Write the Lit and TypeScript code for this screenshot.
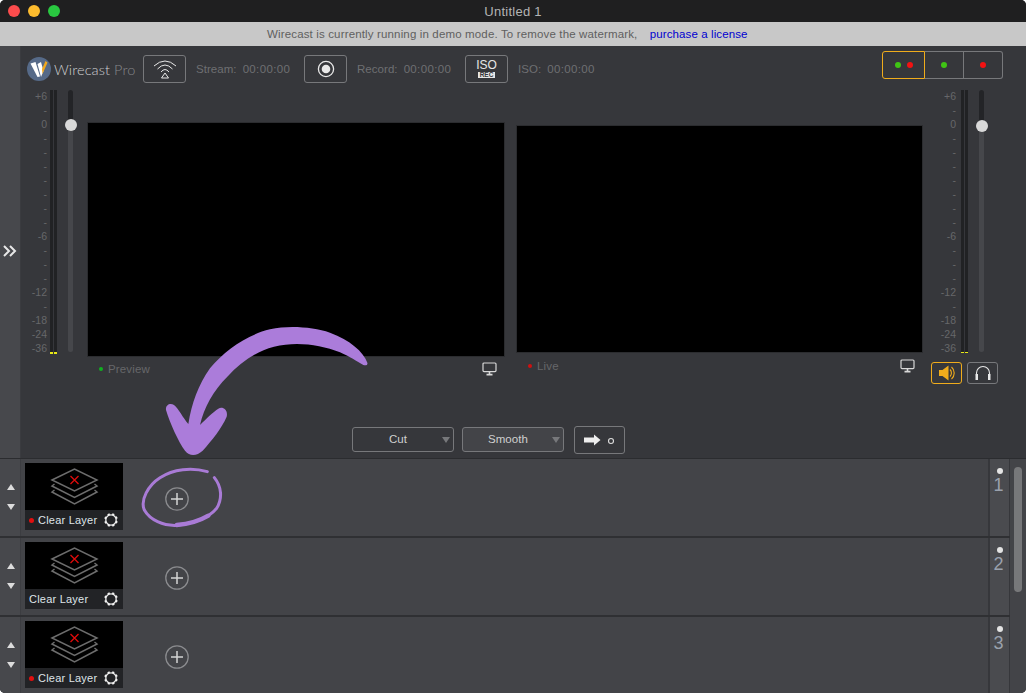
import { LitElement, html, css, svg } from "lit";
import { customElement } from "lit/decorators.js";

const SCALE = ["+6","-","0","-","-","-","-","-","-","-","-6","-","-","-","-12","-","-18","-24","-36"];
const LAYERS = [{ n: 1, dot: true }, { n: 2, dot: false }, { n: 3, dot: true }];

const monitorIcon = html`<svg class="mon" width="15" height="14" viewBox="0 0 15 14" fill="none" stroke="#d8d8d8" stroke-width="1.2"><rect x="1" y="1" width="13" height="8.6" rx="1"/><path d="M7.5 10v2.4M4.5 12.6h6" stroke-width="1.6"/></svg>`;

const gear = svg`<g transform="translate(8 8)" stroke="#f2f2f2" fill="none"><circle r="5.2" stroke-width="1.3"/>${[0,45,90,135,180,225,270,315].map(a => svg`<path d="M0 -5v-1.8" stroke-width="2.2" transform="rotate(${a + 22})"/>`)}</g>`;

@customElement("app-root")
export class AppRoot extends LitElement {
  static styles = css`
    :host { display: block; width: 1026px; height: 693px; font-family: "Liberation Sans", Arial, sans-serif; background: #fff; }
    .win { width: 1026px; height: 693px; overflow: hidden; border-radius: 5px; display: flex; flex-direction: column; background: #36373b; position: relative; }
    .title { height: 22px; flex: none; background: #1f1f20; color: #b4b4b4; font-size: 13px; letter-spacing: .25px; display: flex; align-items: center; justify-content: center; position: relative; }
    .lights { position: absolute; left: 8px; top: 5px; display: flex; gap: 8px; }
    .lights i { width: 12px; height: 12px; border-radius: 50%; display: block; }
    .red { background: #fc4c4d; } .yel { background: #fdbc2e; } .grn { background: #29c840; }
    .demo { height: 24px; flex: none; background: #c8c8c8; color: #5f5f5f; font-size: 11.5px; display: flex; align-items: center; padding-left: 267px; letter-spacing: .15px; white-space: pre; }
    .demo a { color: #0000d0; margin-left: 9px; letter-spacing: .1px; }
    .main { height: 412px; flex: none; display: flex; }
    .side { width: 21px; flex: none; background: #47484c; display: flex; align-items: center; justify-content: center; border-right: 1px solid #3a3b3f; box-sizing: border-box; }
    .side svg { margin-top: -2px; }
    .content { flex: 1; display: flex; flex-direction: column; min-width: 0; }
    .toolbar { height: 44px; flex: none; display: flex; align-items: flex-start; padding: 9px 23px 0 6px; box-sizing: border-box; color: #6e6f72; font-size: 11.5px; }
    .logo { display: flex; align-items: center; width: 116px; height: 28px; gap: 3px; }
    .brand { font-family: "Lato", sans-serif; font-size: 14.5px; color: #cfd0d2; font-weight: 300; white-space: nowrap; letter-spacing: .1px; }
    .brand span { color: #85868a; font-weight: 300; }
    .tbtn { width: 43px; height: 28px; border: 1px solid #77787b; border-radius: 3px; box-sizing: border-box; display: flex; align-items: center; justify-content: center; flex: none; flex-direction: column; }
    .iso { font-size: 12px; line-height: 11px; color: #e6e6e6; }
    .rec { font-size: 6.5px; line-height: 6.5px; font-weight: 700; background: #e6e6e6; color: #36373b; padding: 0 2px; margin-top: 1px; }
    .stat { height: 28px; display: flex; align-items: center; gap: 6px; margin-left: 10px; width: 108px; flex: none; white-space: nowrap; letter-spacing: .05px; }
    .stat span { letter-spacing: .35px; }
    .stat.last { width: auto; }
    .spacer { flex: 1; }
    .seg { display: flex; height: 28px; margin-top: -4px; }
    .seg div { height: 28px; box-sizing: border-box; border: 1px solid #77787b; border-left: none; display: flex; align-items: center; justify-content: center; gap: 6px; }
    .seg .a { width: 43px; border: 1px solid #f0ac1c; border-radius: 3px 0 0 3px; }
    .seg .b { width: 39px; }
    .seg .c { width: 39px; border-radius: 0 3px 3px 0; }
    .seg i { width: 6px; height: 6px; border-radius: 50%; display: block; }
    .g { background: #3fc414; } .r { background: #f31212; }
    .stage { height: 332px; flex: none; display: flex; }
    .mix { display: flex; flex: none; align-items: flex-start; }
    .mix.left { width: 67px; }
    .mix.right { width: 104px; padding-left: 9px; box-sizing: border-box; }
    .scale { width: 26px; flex: none; text-align: right; color: #66676a; font-size: 10.5px; line-height: 14px; margin-top: -1px; height: 266px; }
    .mix.right .scale { width: 25px; }
    .bars { display: flex; gap: 1px; margin-left: 3px; height: 264px; flex: none; }
    .mix.right .bars { margin-left: 5px; height: 263px; }
    .bars i { display: block; width: 3px; height: 100%; background: linear-gradient(#212224 0 262px, #e8e817 262px); }
    .fader { width: 5px; height: 262px; background: linear-gradient(#232427 0 36px, #46474b 36px); border-radius: 3px; margin-left: 11px; position: relative; flex: none; }
    .knob { position: absolute; left: -3.5px; top: 29px; width: 12px; height: 12px; border-radius: 50%; background: #d9d9d9; }
    .mix.right .knob { top: 30px; }
    .mon-col { display: flex; flex-direction: column; flex: none; }
    .mon-col.p { width: 416px; margin-top: 33px; }
    .mon-col.l { width: 405px; margin: 36px 0 0 13px; }
    .screen { background: #000; outline: 1px solid #2b2c2f; }
    .p .screen { height: 233px; }
    .l .screen { height: 226px; }
    .cap { display: flex; align-items: center; color: #66676a; font-size: 11.5px; letter-spacing: .15px; gap: 5px; padding: 0 7px 0 11px; }
    .p .cap { height: 26px; }
    .l .cap { height: 28px; }
    .cap i { width: 4px; height: 4px; border-radius: 50%; display: block; }
    .cap .grow { flex: 1; }
    .cap .g { background: #10b020; } .cap .r { background: #d01010; }
    .audio { display: flex; gap: 5px; margin: 7px 0 0 9px; }
    .abtn { width: 31px; height: 22px; border: 1px solid #77787b; border-radius: 3px; box-sizing: border-box; display: flex; align-items: center; justify-content: center; }
    .abtn.on { border-color: #f0ac1c; }
    .rcol { display: flex; flex-direction: column; }
    .trans { height: 36px; flex: none; display: flex; align-items: flex-start; gap: 8px; padding: 5px 0 0 331px; box-sizing: border-box; }
    .sel { width: 102px; height: 25px; border: 1px solid #77787b; border-radius: 3px; box-sizing: border-box; display: flex; align-items: center; justify-content: center; color: #d0d0d0; font-size: 11.5px; letter-spacing: .1px; position: relative; padding: 0 10px 2px 0; }
    .sel.alt { background: #434448; }
    .sel::after { content: ""; position: absolute; right: 3px; top: 9px; border: 4px solid transparent; border-top: 6px solid #77787b; border-bottom: none; }
    .go { width: 51px; height: 28px; border: 1px solid #77787b; border-radius: 3px; box-sizing: border-box; margin: -1px 0 0 2px; display: flex; align-items: center; justify-content: center; }
    .list { flex: 1; display: flex; border-top: 1px solid #2b2c2f; background: #434448; }
    .rows { width: 1010px; flex: none; }
    .row { height: 77px; display: flex; border-bottom: 2px solid #2f3033; background: #434448; }
    .arrows { width: 21px; flex: none; background: #47484c; border-right: 1px solid #3c3d41; box-sizing: border-box; display: flex; flex-direction: column; align-items: center; justify-content: center; gap: 14px; padding: 0 0 1px 1px; }
    .arrows .up, .arrows .dn { width: 0; height: 0; border: 4px solid transparent; }
    .up { border-bottom: 6px solid #dcdcdc !important; border-top: none !important; }
    .dn { border-top: 6px solid #dcdcdc !important; border-bottom: none !important; }
    .thumb { width: 98px; height: 67px; margin: 4px 0 0 4px; background: #000; flex: none; display: flex; flex-direction: column; }
    .art { height: 47px; display: block; }
    .label { height: 20px; background: #222326; display: flex; align-items: center; padding: 0 4px; color: #dfe3e8; font-size: 11px; letter-spacing: .22px; white-space: nowrap; }
    .label i { width: 5px; height: 5px; flex: none; border-radius: 50%; background: #e01010; display: block; margin-right: 4px; }
    .label .grow { flex: 1; }
    .label svg { flex: none; }
    .plus { margin: 28px 0 0 42px; flex: none; width: 24px; height: 24px; }
    .num { margin-left: auto; width: 22px; box-sizing: border-box; background: #4a4b4f; border-left: 2px solid #36373b; border-right: 1px solid #36373b; display: flex; flex-direction: column; align-items: center; padding-top: 9px; color: #9aa1ad; font-size: 18px; line-height: 17px; }
    .num i { width: 6px; height: 6px; border-radius: 50%; background: #e4e4e4; display: block; margin-bottom: 3px; }
    .num span { margin-right: 2px; }
    .scroll { flex: 1; padding: 8px 0 0 4px; background: #434448; }
    .scroll i { display: block; width: 8px; height: 125px; border-radius: 4px; background: #77787a; }
    .ann { position: absolute; pointer-events: none; }
    .arrow { left: 150px; top: 320px; }
    .ring { left: 0; top: 455px; }
  `;

  private mixer(side: string) {
    return html`<div class="mix ${side}">
      <div class="scale">${SCALE.map(s => html`<div>${s}</div>`)}</div>
      <div class="bars"><i></i><i></i></div>
      <div class="fader"><div class="knob"></div></div>
    </div>`;
  }

  private layer(l: { n: number; dot: boolean }) {
    return html`<div class="row">
      <div class="arrows"><div class="up"></div><div class="dn"></div></div>
      <div class="thumb">
        <svg class="art" width="98" height="47" viewBox="0 0 98 47" fill="none" stroke="#6d6d6d" stroke-width="1.5">
          <path d="M27 17 49.5 6 72 17 49.5 28Z"/>
          <path d="M29.5 21 27 23 49.5 34.500 72 23 69.500 21"/>
          <path d="M29.5 27 27 29 49.5 41 72 29 69.500 27"/>
          <path d="M45.5 13 53.5 21M53.5 13 45.500 21" stroke="#e00b0b" stroke-width="1.3"/>
        </svg>
        <div class="label">${l.dot ? html`<i></i>` : ""}<span>Clear Layer</span><span class="grow"></span><svg width="16" height="16" viewBox="0 0 16 16">${gear}</svg></div>
      </div>
      <svg class="plus" viewBox="0 0 24 24" fill="none" stroke="#8a8b8e" stroke-width="1.3"><circle cx="12" cy="12" r="11.2"/><path d="M12 6v12M6 12h12" stroke="#d4d4d4" stroke-width="1.5"/></svg>
      <div class="num"><i></i><span>${l.n}</span></div>
    </div>`;
  }

  render() {
    return html`<div class="win">
      <div class="title"><div class="lights"><i class="red"></i><i class="yel"></i><i class="grn"></i></div>Untitled 1</div>
      <div class="demo">Wirecast is currently running in demo mode. To remove the watermark, <a>purchase a license</a></div>
      <div class="main">
        <div class="side"><svg width="14" height="12" viewBox="0 0 14 12" fill="none" stroke="#e8e8e8" stroke-width="2"><path d="M1 1l5 5-5 5M7 1l5 5-5 5"/></svg></div>
        <div class="content">
          <div class="toolbar">
            <div class="logo">
              <svg width="24" height="24" viewBox="0 0 24 24"><circle cx="12" cy="12" r="12" fill="#566a88"/><path d="M3.500 6.500 8.500 5 13 19.500 10.500 20Z" fill="#fff"/><path d="M10.500 7 14 5 16.500 14 14 20Z" fill="#fff"/><path d="M15 12 18.500 4 20.500 5.500 15.500 17Z" fill="#f0a81e"/></svg>
              <div class="brand">Wirecast<span> Pro</span></div>
            </div>
            <div class="tbtn"><svg width="24" height="20" viewBox="0 0 24 20" fill="none" stroke="#e8e8e8" stroke-width="1"><path d="M1 7Q12 -3 23 7M4.500 10Q12 2 19.500 10M8 13Q12 8 16 13"/><path d="M12 14 15.500 19H8.500Z"/></svg></div>
            <div class="stat">Stream: <span>00:00:00</span></div>
            <div class="tbtn"><svg width="18" height="18" viewBox="0 0 18 18"><circle cx="9" cy="9" r="7.600" fill="none" stroke="#e8e8e8" stroke-width="1.300"/><circle cx="9" cy="9" r="4.300" fill="#e8e8e8"/></svg></div>
            <div class="stat">Record: <span>00:00:00</span></div>
            <div class="tbtn"><span class="iso">ISO</span><span class="rec">REC</span></div>
            <div class="stat last">ISO: <span>00:00:00</span></div>
            <div class="spacer"></div>
            <div class="seg"><div class="a"><i class="g"></i><i class="r"></i></div><div class="b"><i class="g"></i></div><div class="c"><i class="r"></i></div></div>
          </div>
          <div class="stage">
            ${this.mixer("left")}
            <div class="mon-col p"><div class="screen"></div><div class="cap"><i class="g"></i>Preview<span class="grow"></span>${monitorIcon}</div></div>
            <div class="mon-col l"><div class="screen"></div><div class="cap"><i class="r"></i>Live<span class="grow"></span>${monitorIcon}</div></div>
            <div class="rcol">
              ${this.mixer("right")}
              <div class="audio">
                <div class="abtn on"><svg width="18" height="16" viewBox="0 0 18 16" fill="none"><path d="M1 5h3.500l6-4.500v15l-6-4.500H1z" fill="#f0ac1c"/><path d="M12 4.500a5 5 0 0 1 0 7M13.500 2a8 8 0 0 1 0 12" stroke="#f0ac1c" stroke-width="1.100"/></svg></div>
                <div class="abtn"><svg width="18" height="16" viewBox="0 0 18 16" fill="none" stroke="#e8e8e8"><path d="M2.500 11V8a6.500 6.500 0 0 1 13 0v3" stroke-width="1.100"/><rect x="1.500" y="9" width="2.500" height="6" fill="#e8e8e8" stroke="none"/><rect x="14" y="9" width="2.500" height="6" fill="#e8e8e8" stroke="none"/></svg></div>
              </div>
            </div>
          </div>
          <div class="trans">
            <div class="sel">Cut</div>
            <div class="sel alt">Smooth</div>
            <div class="go"><svg width="36" height="14" viewBox="0 0 36 14"><path d="M2 4.500h10V1.500l6.500 5.500-6.500 5.500V9.500H2z" fill="#eee"/><circle cx="29" cy="8" r="2.500" fill="none" stroke="#ddd" stroke-width="1.100"/></svg></div>
          </div>
        </div>
      </div>
      <div class="list">
        <div class="rows">${LAYERS.map(l => this.layer(l))}</div>
        <div class="scroll"><i></i></div>
      </div>
      <svg class="ann arrow" width="240" height="140" viewBox="0 0 720 420"><path fill="#ab7cda" d="M652 128C640 95 600 60 540 38C490 22 420 15 360 28C290 45 225 90 180 145C145 195 125 250 115 312C100 295 85 265 72 255C60 247 46 255 48 270C60 310 85 365 105 392C120 410 140 408 158 392C185 362 215 325 230 290C235 270 218 258 205 266C190 275 170 295 150 315C162 262 190 212 232 170C270 130 315 95 372 80C440 64 510 74 570 97C600 110 620 124 640 135C648 138 654 134 652 128Z"/></svg>
      <svg class="ann ring" width="240" height="90" viewBox="0 0 720 270" fill="none" stroke="#a97bd6" stroke-linecap="round"><path d="M643 68C665 95 668 130 650 160C625 190 580 205 530 211C490 213 450 195 433 165C420 135 445 90 480 68C520 42 575 36 622 50" stroke-width="9"/><path d="M530 210C570 207 600 197 625 182" stroke-width="13"/></svg>
    </div>`;
  }
}
